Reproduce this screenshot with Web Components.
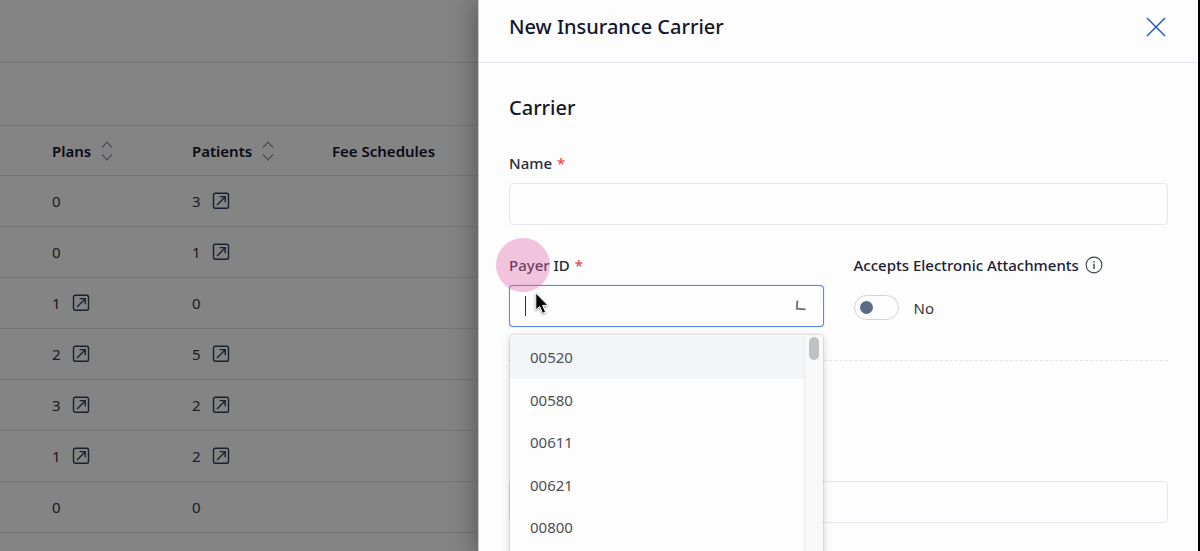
<!DOCTYPE html>
<html lang="en">
<head>
<meta charset="utf-8">
<meta name="viewport" content="width=device-width, initial-scale=1">
<title>New Insurance Carrier</title>
<style>
  body {
    margin: 0;
    background: #fdfdfd;
    color: #12162b;
    font: 15px/20px "Noto Sans", "Open Sans", sans-serif;
    --line: #e3e6ec;
    --ink: #12162b;
    --text: #33363f;
  }
</style>
</head>
<body>
<app-shell>
  <carrier-table slot="page"></carrier-table>
  <side-drawer slot="drawer" heading="New Insurance Carrier">
    <form-section heading="Carrier">
      <text-field label="Name" required></text-field>
      <field-row>
        <payer-picker></payer-picker>
        <toggle-field label="Accepts Electronic Attachments" state="No"></toggle-field>
      </field-row>
    </form-section>
    <form-section>
      <text-field></text-field>
    </form-section>
  </side-drawer>
</app-shell>

<script>
const define = (name, markup, setup) => {
  const template = document.createElement('template');
  template.innerHTML = markup;
  customElements.define(name, class extends HTMLElement {
    constructor() {
      super();
      this.attachShadow({ mode: 'open' });
    }
    connectedCallback() {
      if (this.shadowRoot.childNodes.length) return;
      this.shadowRoot.append(template.content.cloneNode(true));
      if (setup) setup(this, this.shadowRoot);
    }
  });
};

define('app-shell', `
  <style>
    :host { display: grid; grid-template-columns: minmax(0, 1fr) minmax(0, 720px); height: 100vh;
            box-sizing: border-box; overflow: hidden; border-right: 2px solid #000; }
    main { position: relative; overflow: hidden; min-width: 0; }
    .shade { position: absolute; inset: 0; background: rgba(0, 0, 0, .48); }
  </style>
  <main><slot name="page"></slot><div class="shade"></div></main>
  <slot name="drawer"></slot>
`);

define('open-icon', `
  <style>:host { display: inline-flex; } svg { display: block; }</style>
  <svg width="18" height="18" viewBox="0 0 18 18" fill="none" stroke="#2c405c" stroke-width="1.4">
    <rect x="1.5" y="1.2" width="15" height="15" rx="1.8"/>
    <path d="M5 13 13 5M7.6 4.6H13.2V10.2"/>
  </svg>
`);

define('sort-icon', `
  <style>:host { display: inline-flex; } svg { display: block; }</style>
  <svg width="12" height="20" viewBox="0 0 12 20" fill="none" stroke="#8b95a1" stroke-width="1.2">
    <path d="M1 6.5 6 1.2 11 6.5M1 13.5 6 18.8 11 13.5"/>
  </svg>
`);

define('carrier-table', `
  <style>
    :host { display: block; }
    header, .tools { height: 62px; border-bottom: 1px solid #dfe2e6; }
    table { width: 100%; min-width: 478px; table-layout: fixed; border-collapse: separate; border-spacing: 0; }
    th, td { box-sizing: border-box; height: 51px; padding: 0 0 0 20px; text-align: left;
             border-bottom: 1px solid #dfe2e6; white-space: nowrap; vertical-align: middle; }
    th { height: 50px; font-weight: 600; }
    th:first-child, td:first-child { padding-left: 52px; }
    td { color: var(--text); }
    .a { width: 172px; } .b { width: 140px; }
    .cell { display: flex; align-items: center; gap: 11px; }
    th .cell { gap: 10px; }
    button { all: unset; display: inline-flex; }
    a { display: inline-flex; }
  </style>
  <header></header>
  <div class="tools"></div>
  <table>
    <colgroup><col class="a"><col class="b"><col></colgroup>
    <thead><tr>
      <th><div class="cell">Plans<button aria-label="Sort by plans"><sort-icon></sort-icon></button></div></th>
      <th><div class="cell">Patients<button aria-label="Sort by patients"><sort-icon></sort-icon></button></div></th>
      <th>Fee Schedules</th>
    </tr></thead>
    <tbody></tbody>
  </table>
`, (host, root) => {
  const rows = [[0, 3], [0, 1], [1, 0], [2, 5], [3, 2], [1, 2], [0, 0]];
  const cell = n => `<td><div class="cell">${n}${n ? '<a href="#" aria-label="Open list"><open-icon></open-icon></a>' : ''}</div></td>`;
  root.querySelector('tbody').innerHTML =
    rows.map(r => `<tr>${r.map(cell).join('')}<td></td></tr>`).join('');
});

define('side-drawer', `
  <style>
    :host { display: block; position: relative; min-width: 0; background: #fdfdfd;
            border-left: 1px solid #c8c8c8; box-shadow: -4px 0 24px rgba(0, 0, 0, .3); }
    header { display: flex; align-items: center; justify-content: space-between; height: 54px;
             padding: 0 30px 8px; border-bottom: 1px solid var(--line); }
    h1 { margin: 0; font-size: 20px; line-height: 28px; font-weight: 500; color: var(--ink); }
    button { all: unset; display: flex; padding: 2px; }
    .body { padding: 0 30px; }
  </style>
  <header>
    <h1></h1>
    <button aria-label="Close">
      <svg width="20" height="20" viewBox="0 0 20 20" stroke="#2159d6" stroke-width="1.5"><path d="M1 1 19 19M19 1 1 19"/></svg>
    </button>
  </header>
  <div class="body"><slot></slot></div>
`, (host, root) => { root.querySelector('h1').textContent = host.getAttribute('heading'); });

define('form-section', `
  <style>
    :host { display: block; padding: 31px 0 33px; border-bottom: 1px dashed #e4e4e6; }
    :host(:last-of-type) { border-bottom: 0; padding-top: 120px; }
    h2 { margin: 0 0 31px; font-size: 20px; line-height: 28px; font-weight: 500; color: var(--ink); }
    .fields { display: flex; flex-direction: column; gap: 30px; }
  </style>
  <div class="fields"><slot></slot></div>
`, (host, root) => {
  if (!host.hasAttribute('heading')) return;
  const h = document.createElement('h2');
  h.textContent = host.getAttribute('heading');
  root.querySelector('.fields').before(h);
});

define('field-row', `
  <style>
    :host { display: grid; grid-template-columns: minmax(0, 1fr) minmax(0, 1fr); gap: 30px; }
  </style>
  <slot></slot>
`);

define('text-field', `
  <style>
    :host { display: flex; flex-direction: column; gap: 10px; }
    label { font-weight: 500; color: #262a3d; }
    .req { color: #ee4a4a; margin-left: 5px; }
    input { box-sizing: border-box; width: 100%; height: 42px; padding: 0 15px; font: inherit;
            border: 1px solid var(--line); border-radius: 4px; background: #fdfdfd; outline: 0; }
  </style>
  <input id="field">
`, (host, root) => {
  const text = host.getAttribute('label');
  const input = root.querySelector('input');
  if (!text) { input.setAttribute('aria-label', 'Carrier details'); return; }
  const label = document.createElement('label');
  label.htmlFor = 'field';
  label.innerHTML = text + (host.hasAttribute('required') ? '<span class="req">*</span>' : '');
  input.before(label);
});

define('payer-picker', `
  <style>
    :host { display: flex; flex-direction: column; gap: 10px; position: relative; }
    label { font-weight: 500; color: #262a3d; }
    .req { color: #ee4a4a; margin-left: 5px; }
    .box { display: flex; align-items: center; box-sizing: border-box; height: 42px; padding: 0 15px;
           border: 1px solid #5d86e8; border-radius: 4px; background: #fdfdfd;
           box-shadow: 0 0 1px #5d86e8; }
    .caret { width: 1px; height: 20px; background: #333; }
    input { flex: 1; min-width: 0; padding: 0; border: 0; outline: 0; background: none; font: inherit; caret-color: transparent; }
    .menu { position: absolute; top: 80px; left: 1px; right: 1px; height: 300px; z-index: 1;
            display: flex; background: #fdfdfd; border-radius: 4px; overflow: hidden;
            box-shadow: 0 0 2px rgba(0, 0, 0, .3), 0 2px 10px rgba(0, 0, 0, .16); }
    ul { flex: 1; margin: 0; padding: 1px 0 0; list-style: none; }
    li { box-sizing: border-box; height: 42px; padding: 11px 20px; color: #4c4f56; }
    li:nth-child(odd) { height: 43px; }
    li[aria-selected=true] { background: #f2f6f9; }
    .track { width: 10px; padding: 2px 4px 0; background: #f8f8f8; border-left: 1px solid #ececec; }
    .thumb { height: 23px; border-radius: 5px; background: #c1c1c1; }
    .tap { position: absolute; left: -13px; top: -17px; width: 54px; height: 54px; border-radius: 50%;
           background: rgba(222, 100, 165, .38); z-index: 2; }
    .pointer { position: absolute; left: 26px; top: 37px; z-index: 3; filter: drop-shadow(0 1px 1px rgba(0, 0, 0, .4)); }
  </style>
  <label for="payer">Payer ID<span class="req">*</span></label>
  <div class="box">
    <span class="caret"></span>
    <input id="payer" role="combobox" aria-expanded="true" aria-controls="options">
    <svg width="16" height="16" viewBox="0 0 16 16" fill="none" stroke="#6b6b6b" stroke-width="1.8"><path d="M5.4 2.6 4.8 10.6 13.6 11.4"/></svg>
  </div>
  <div class="menu">
    <ul id="options" role="listbox">
      <li role="option" aria-selected="true">00520</li>
      <li role="option">00580</li>
      <li role="option">00611</li>
      <li role="option">00621</li>
      <li role="option">00800</li>
    </ul>
    <div class="track"><div class="thumb"></div></div>
  </div>
  <div class="tap"></div>
  <svg class="pointer" width="14" height="24" viewBox="0 0 14 24" fill="#000" stroke="#fff" stroke-width="1">
    <path d="M.8 1V18L4.6 14.5 7.6 21.4 10.6 20.1 7.6 13.4H13Z"/>
  </svg>
`);

define('toggle-field', `
  <style>
    :host { display: flex; flex-direction: column; gap: 20px; }
    .title { display: flex; align-items: center; gap: 6px; font-weight: 500; color: #1c2034; height: 20px; white-space: nowrap; }
    .switch { display: flex; align-items: center; gap: 15px; color: var(--text); }
    input { appearance: none; box-sizing: border-box; width: 45px; height: 25px; margin: 0; padding: 5px;
            border: 1px solid #cfd4da; border-radius: 13px; background: #fdfdfd; }
    input::before { content: ""; display: block; width: 13px; height: 13px; border-radius: 50%; background: #5b6b87; }
    input:checked::before { margin-left: 20px; }
  </style>
  <div class="title">
    <label for="toggle"></label>
    <svg width="18" height="18" viewBox="0 0 18 18" fill="none" stroke="#3c4150" stroke-width="1.1">
      <circle cx="9" cy="9" r="7.9"/><path d="M9 7.8V13M9 5V6.5" stroke-width="1.4"/>
    </svg>
  </div>
  <div class="switch"><input id="toggle" type="checkbox" role="switch" aria-labelledby="toggle-state"><span id="toggle-state"></span></div>
`, (host, root) => {
  root.querySelector('label').textContent = host.getAttribute('label');
  root.querySelector('span').textContent = host.getAttribute('state');
});
</script>
</body>
</html>
